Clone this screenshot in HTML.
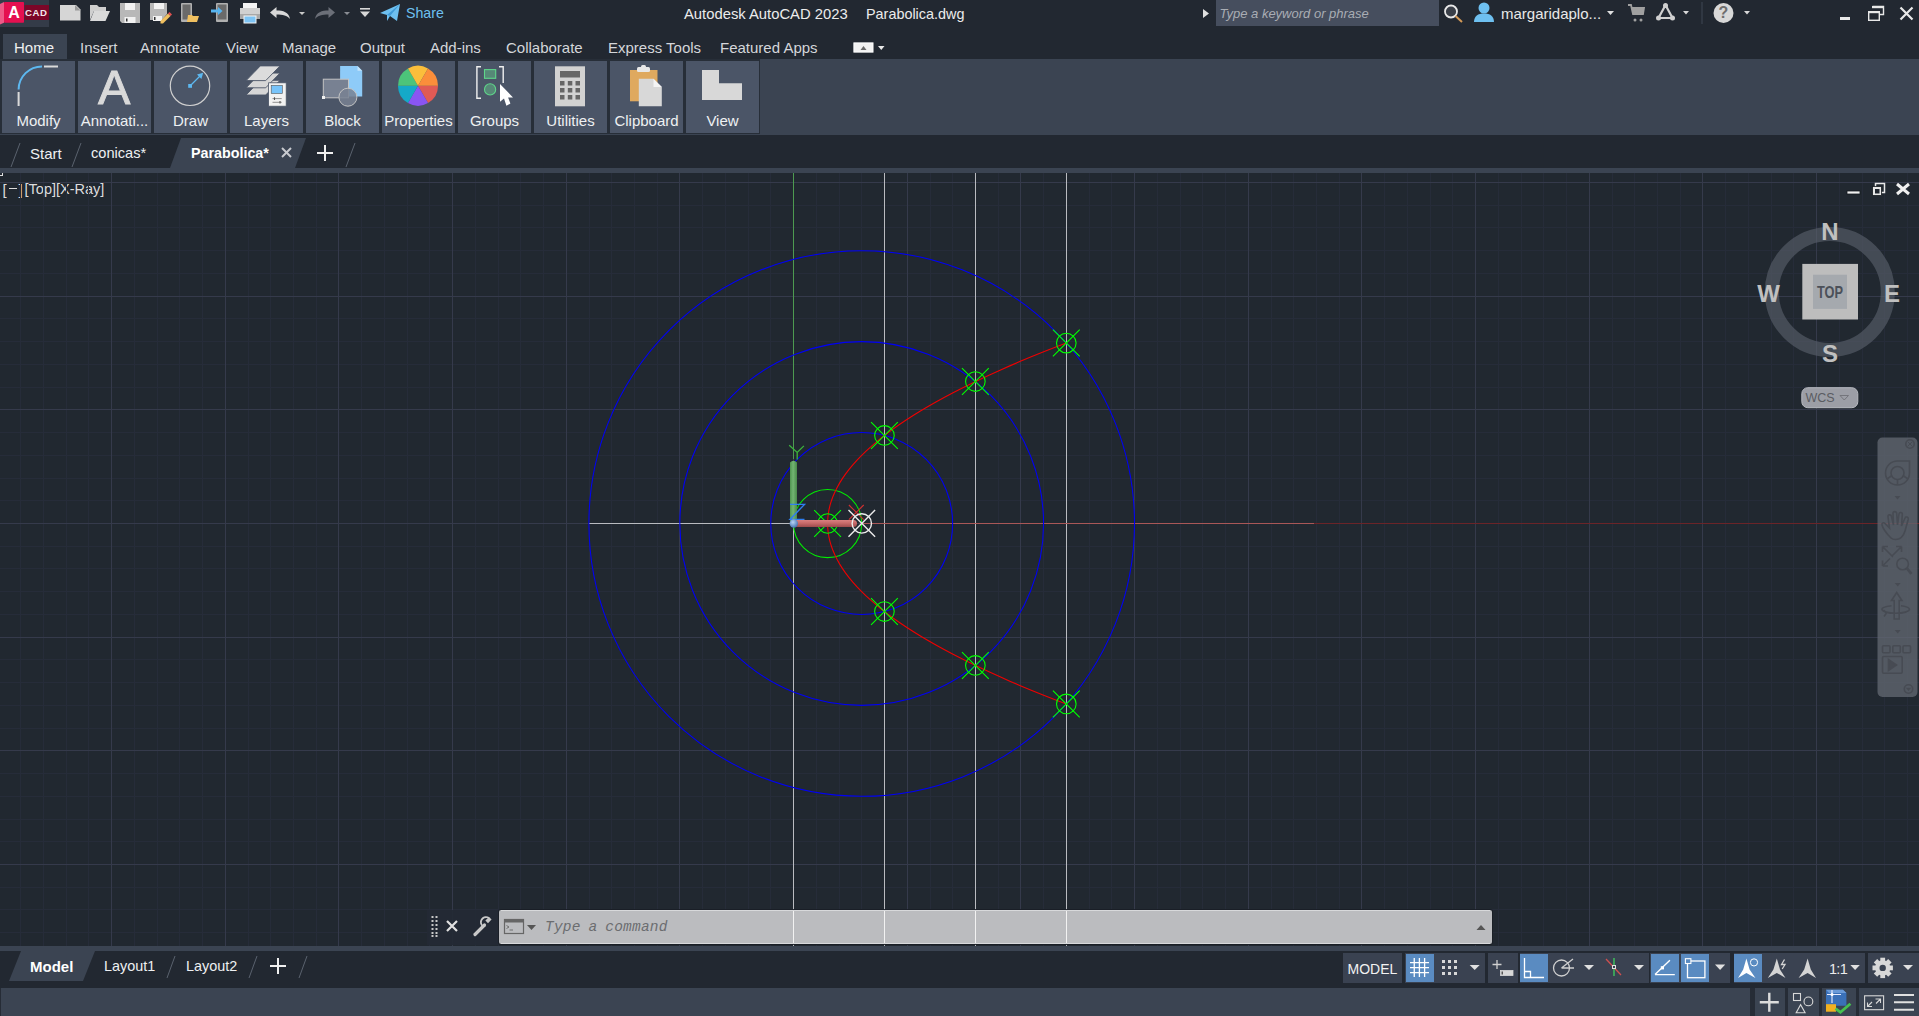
<!DOCTYPE html><html><head><meta charset="utf-8"><style>
*{margin:0;padding:0;box-sizing:border-box}
html,body{width:1919px;height:1016px;overflow:hidden;background:#222831;font-family:"Liberation Sans",sans-serif;color:#e6e6e6}
.a{position:absolute}
.t{position:absolute;white-space:nowrap;line-height:1}
svg{position:absolute;overflow:visible}
</style></head><body><div class="a" style="left:0;top:0;width:1919px;height:59px;background:#222831"></div>
<div class="a" style="left:0;top:59px;width:1919px;height:76px;background:#3b4452"></div>
<div class="a" style="left:0;top:135px;width:1919px;height:33px;background:#222831"></div>
<div class="a" style="left:0;top:168px;width:1919px;height:5px;background:#3b4452"></div>
<div class="a" style="left:0;top:173px;width:1919px;height:773px;background:#212830"></div>
<div class="a" style="left:0;top:946px;width:1919px;height:5px;background:#3b4452"></div>
<div class="a" style="left:0;top:951px;width:1919px;height:37px;background:#222831"></div>
<div class="a" style="left:0;top:988px;width:1919px;height:28px;background:#3b4452"></div>
<div class="a" style="left:0;top:988px;width:1px;height:28px;background:#262c36"></div>
<div class="a" style="left:0;top:0;width:49px;height:27px;background:#343b48"></div>
<svg style="left:0;top:0" width="50" height="27"><path d="M0 4L4 2V22.7L0 24.5Z" fill="#ee5a88"/><rect x="4" y="2" width="20" height="20.7" rx="0.8" fill="#e51050"/><rect x="24.5" y="5" width="24.5" height="15" fill="#7c0628"/><text x="14" y="18" font-family="Liberation Sans" font-weight="bold" font-size="16" fill="#ffffff" text-anchor="middle">A</text><text x="36.3" y="16" font-family="Liberation Sans" font-weight="bold" font-size="9.6" letter-spacing="0.6" fill="#f4e8ec" text-anchor="middle">CAD</text></svg>
<div class="t" style="left:684px;top:7.3px;font-size:14.8px;color:#ececec">Autodesk AutoCAD 2023</div><div class="t" style="left:866px;top:7.3px;font-size:14.4px;color:#ececec">Parabolica.dwg</div>
<div class="t" style="left:406px;top:6.3px;font-size:14.2px;color:#6ec0f0">Share</div>
<div class="a" style="left:1216px;top:0;width:223px;height:26px;background:#464e5e"></div>
<div class="t" style="left:1219.5px;top:7px;font-size:13px;font-style:italic;color:#a9adb4">Type a keyword or phrase</div>
<div class="t" style="left:1501px;top:6px;font-size:15px;color:#e8e8e8">margaridaplo...</div>
<div class="a" style="left:3px;top:34px;width:64px;height:25px;background:#3b4452"></div>
<div class="t" style="left:14px;top:39.5px;font-size:15px;color:#f0f0f0">Home</div>
<div class="t" style="left:80px;top:39.5px;font-size:15px;color:#d4d6da">Insert</div>
<div class="t" style="left:140px;top:39.5px;font-size:15px;color:#d4d6da">Annotate</div>
<div class="t" style="left:226px;top:39.5px;font-size:15px;color:#d4d6da">View</div>
<div class="t" style="left:282px;top:39.5px;font-size:15px;color:#d4d6da">Manage</div>
<div class="t" style="left:360px;top:39.5px;font-size:15px;color:#d4d6da">Output</div>
<div class="t" style="left:430px;top:39.5px;font-size:15px;color:#d4d6da">Add-ins</div>
<div class="t" style="left:506px;top:39.5px;font-size:15px;color:#d4d6da">Collaborate</div>
<div class="t" style="left:608px;top:39.5px;font-size:15px;color:#d4d6da">Express Tools</div>
<div class="t" style="left:720px;top:39.5px;font-size:15px;color:#d4d6da">Featured Apps</div>
<div class="a" style="left:0;top:59px;width:760px;height:75px;background:#272e38"></div>
<div class="a" style="left:2px;top:61px;width:73px;height:72px;background:#4b5567"></div>
<div class="t" style="left:2px;top:113px;width:73px;text-align:center;font-size:15px;color:#eef0f2">Modify</div>
<div class="a" style="left:78px;top:61px;width:73px;height:72px;background:#4b5567"></div>
<div class="t" style="left:78px;top:113px;width:73px;text-align:center;font-size:15px;color:#eef0f2">Annotati...</div>
<div class="a" style="left:154px;top:61px;width:73px;height:72px;background:#4b5567"></div>
<div class="t" style="left:154px;top:113px;width:73px;text-align:center;font-size:15px;color:#eef0f2">Draw</div>
<div class="a" style="left:230px;top:61px;width:73px;height:72px;background:#4b5567"></div>
<div class="t" style="left:230px;top:113px;width:73px;text-align:center;font-size:15px;color:#eef0f2">Layers</div>
<div class="a" style="left:306px;top:61px;width:73px;height:72px;background:#4b5567"></div>
<div class="t" style="left:306px;top:113px;width:73px;text-align:center;font-size:15px;color:#eef0f2">Block</div>
<div class="a" style="left:382px;top:61px;width:73px;height:72px;background:#4b5567"></div>
<div class="t" style="left:382px;top:113px;width:73px;text-align:center;font-size:15px;color:#eef0f2">Properties</div>
<div class="a" style="left:458px;top:61px;width:73px;height:72px;background:#4b5567"></div>
<div class="t" style="left:458px;top:113px;width:73px;text-align:center;font-size:15px;color:#eef0f2">Groups</div>
<div class="a" style="left:534px;top:61px;width:73px;height:72px;background:#4b5567"></div>
<div class="t" style="left:534px;top:113px;width:73px;text-align:center;font-size:15px;color:#eef0f2">Utilities</div>
<div class="a" style="left:610px;top:61px;width:73px;height:72px;background:#4b5567"></div>
<div class="t" style="left:610px;top:113px;width:73px;text-align:center;font-size:15px;color:#eef0f2">Clipboard</div>
<div class="a" style="left:686px;top:61px;width:73px;height:72px;background:#4b5567"></div>
<div class="t" style="left:686px;top:113px;width:73px;text-align:center;font-size:15px;color:#eef0f2">View</div>
<svg style="left:0;top:134px" width="400" height="40"><polygon points="170,34 181,4 306,4 295,34" fill="#3b4452"/><g stroke="#5a626e" stroke-width="1"><line x1="11" y1="33" x2="20" y2="9"/><line x1="72" y1="33" x2="81" y2="9"/><line x1="346" y1="33" x2="355" y2="9"/></g><g stroke="#c8cacf" stroke-width="2"><line x1="282" y1="14" x2="291" y2="23"/><line x1="291" y1="14" x2="282" y2="23"/></g><g stroke="#f0f0f0" stroke-width="2"><line x1="317" y1="19" x2="333" y2="19"/><line x1="325" y1="11" x2="325" y2="27"/></g></svg>
<div class="t" style="left:30px;top:146px;font-size:15px;color:#eef0f2">Start</div>
<div class="t" style="left:91px;top:146px;font-size:14.6px;color:#eef0f2">conicas*</div>
<div class="t" style="left:191px;top:146px;font-size:14.3px;font-weight:bold;color:#ffffff">Parabolica*</div>
<svg style="left:0;top:951px" width="320" height="37"><polygon points="9,30 21,0 95,0 83,30" fill="#3b4452"/><g stroke="#5a626e" stroke-width="1"><line x1="167" y1="27" x2="175" y2="5"/><line x1="249" y1="27" x2="257" y2="5"/><line x1="299" y1="27" x2="307" y2="5"/></g><g stroke="#f0f0f0" stroke-width="2"><line x1="270" y1="15" x2="286" y2="15"/><line x1="278" y1="7" x2="278" y2="23"/></g></svg>
<div class="t" style="left:30px;top:959px;font-size:15px;font-weight:bold;color:#ffffff">Model</div>
<div class="t" style="left:104px;top:959px;font-size:14.4px;color:#eef0f2">Layout1</div>
<div class="t" style="left:186px;top:959px;font-size:14.4px;color:#eef0f2">Layout2</div>
<div class="t" style="left:2.5px;top:181.5px;font-size:15px;color:#dcdcdc">[</div><div class="a" style="left:8.8px;top:188px;width:8.4px;height:1.3px;background:#dcdcdc"></div><div class="t" style="left:18.4px;top:181.5px;font-size:15px;color:#dcdcdc">]</div><div class="t" style="left:24.6px;top:181.5px;font-size:14.5px;color:#dcdcdc">[Top][X-Ray]</div><div class="a" style="left:0;top:175px;width:3px;height:1px;background:#e0e0e0"></div><div class="a" style="left:2px;top:173px;width:1px;height:3px;background:#e0e0e0"></div>
<svg style="left:0;top:0" width="1919" height="1016" viewBox="0 0 1919 1016"><defs><clipPath id="vpc"><rect x="0" y="173" width="1919" height="773"/></clipPath></defs><g clip-path="url(#vpc)"><path d="M20.5 173V946M43.5 173V946M66.5 173V946M88.5 173V946M134.5 173V946M157.5 173V946M179.5 173V946M202.5 173V946M248.5 173V946M270.5 173V946M293.5 173V946M316.5 173V946M361.5 173V946M384.5 173V946M407.5 173V946M429.5 173V946M475.5 173V946M498.5 173V946M520.5 173V946M543.5 173V946M589.5 173V946M611.5 173V946M634.5 173V946M657.5 173V946M702.5 173V946M725.5 173V946M748.5 173V946M770.5 173V946M816.5 173V946M839.5 173V946M861.5 173V946M884.5 173V946M930.5 173V946M952.5 173V946M975.5 173V946M998.5 173V946M1043.5 173V946M1066.5 173V946M1089.5 173V946M1111.5 173V946M1157.5 173V946M1180.5 173V946M1202.5 173V946M1225.5 173V946M1271.5 173V946M1293.5 173V946M1316.5 173V946M1339.5 173V946M1384.5 173V946M1407.5 173V946M1430.5 173V946M1452.5 173V946M1498.5 173V946M1521.5 173V946M1543.5 173V946M1566.5 173V946M1612.5 173V946M1634.5 173V946M1657.5 173V946M1680.5 173V946M1725.5 173V946M1748.5 173V946M1771.5 173V946M1793.5 173V946M1839.5 173V946M1862.5 173V946M1884.5 173V946M1907.5 173V946M0 205.5H1919M0 227.5H1919M0 250.5H1919M0 273.5H1919M0 318.5H1919M0 341.5H1919M0 364.5H1919M0 387.5H1919M0 432.5H1919M0 455.5H1919M0 478.5H1919M0 500.5H1919M0 546.5H1919M0 568.5H1919M0 591.5H1919M0 614.5H1919M0 659.5H1919M0 682.5H1919M0 705.5H1919M0 728.5H1919M0 773.5H1919M0 796.5H1919M0 819.5H1919M0 841.5H1919M0 887.5H1919M0 909.5H1919M0 932.5H1919" stroke="#262c39" stroke-width="1" fill="none" shape-rendering="crispEdges"/><path d="M111.5 173V946M225.5 173V946M338.5 173V946M452.5 173V946M566.5 173V946M679.5 173V946M793.5 173V946M907.5 173V946M1020.5 173V946M1134.5 173V946M1248.5 173V946M1361.5 173V946M1475.5 173V946M1589.5 173V946M1702.5 173V946M1816.5 173V946M0 182.5H1919M0 296.5H1919M0 409.5H1919M0 523.5H1919M0 637.5H1919M0 750.5H1919M0 864.5H1919" stroke="#353a4b" stroke-width="1" fill="none" shape-rendering="crispEdges"/><path d="M884.5 173V946M975.5 173V946M1066.5 173V946M793.5 523V946M589 523.5H793" stroke="#b9bbc0" stroke-width="1.2" fill="none" shape-rendering="crispEdges"/><path d="M793.5 173V459" stroke="#4d9a50" stroke-width="1" fill="none" shape-rendering="crispEdges"/><path d="M862 523.5H1314" stroke="#a95757" stroke-width="1" fill="none" shape-rendering="crispEdges"/><path d="M1314 523.5H1919" stroke="#6b2428" stroke-width="1" fill="none" shape-rendering="crispEdges"/><circle cx="861.70" cy="523.50" r="90.93" stroke="#0000f6" stroke-width="1.05" fill="none"/><circle cx="861.70" cy="523.50" r="181.86" stroke="#0000f6" stroke-width="1.05" fill="none"/><circle cx="861.70" cy="523.50" r="272.80" stroke="#0000f6" stroke-width="1.05" fill="none"/><circle cx="827.60" cy="523.50" r="34.10" stroke="#00f000" stroke-width="1.05" fill="none"/><polyline points="1066.30,343.06 1054.51,347.57 1043.02,352.08 1031.83,356.60 1020.94,361.11 1010.35,365.62 1000.06,370.13 990.06,374.64 980.37,379.15 970.97,383.66 961.87,388.17 953.06,392.68 944.56,397.19 936.36,401.70 928.45,406.22 920.84,410.73 913.53,415.24 906.52,419.75 899.81,424.26 893.39,428.77 887.27,433.28 881.46,437.79 875.94,442.30 870.71,446.81 865.79,451.32 861.17,455.84 856.84,460.35 852.81,464.86 849.08,469.37 845.65,473.88 842.52,478.39 839.68,482.90 837.15,487.41 834.91,491.92 832.97,496.43 831.33,500.95 829.99,505.46 828.94,509.97 828.20,514.48 827.75,518.99 827.60,523.50 827.75,528.01 828.20,532.52 828.94,537.03 829.99,541.54 831.33,546.05 832.97,550.57 834.91,555.08 837.15,559.59 839.68,564.10 842.52,568.61 845.65,573.12 849.08,577.63 852.81,582.14 856.84,586.65 861.17,591.16 865.79,595.68 870.71,600.19 875.94,604.70 881.46,609.21 887.27,613.72 893.39,618.23 899.81,622.74 906.52,627.25 913.53,631.76 920.84,636.27 928.45,640.78 936.36,645.30 944.56,649.81 953.06,654.32 961.87,658.83 970.97,663.34 980.37,667.85 990.06,672.36 1000.06,676.87 1010.35,681.38 1020.94,685.89 1031.83,690.40 1043.02,694.92 1054.51,699.43 1066.30,703.94" stroke="#f00000" stroke-width="1.1" fill="none"/><g stroke="#00ff00" stroke-width="1.1" fill="none"><circle cx="827.60" cy="523.50" r="9.8"/><path d="M814.20 510.10L841.00 536.90M814.20 536.90L841.00 510.10"/></g><g stroke="#00ff00" stroke-width="1.1" fill="none"><circle cx="884.43" cy="611.54" r="9.8"/><path d="M871.03 598.14L897.83 624.94M871.03 624.94L897.83 598.14"/></g><g stroke="#00ff00" stroke-width="1.1" fill="none"><circle cx="884.43" cy="435.46" r="9.8"/><path d="M871.03 422.06L897.83 448.86M871.03 448.86L897.83 422.06"/></g><g stroke="#00ff00" stroke-width="1.1" fill="none"><circle cx="975.36" cy="665.47" r="9.8"/><path d="M961.96 652.07L988.76 678.87M961.96 678.87L988.76 652.07"/></g><g stroke="#00ff00" stroke-width="1.1" fill="none"><circle cx="975.36" cy="381.53" r="9.8"/><path d="M961.96 368.13L988.76 394.93M961.96 394.93L988.76 368.13"/></g><g stroke="#00ff00" stroke-width="1.1" fill="none"><circle cx="1066.30" cy="703.94" r="9.8"/><path d="M1052.90 690.54L1079.70 717.34M1052.90 717.34L1079.70 690.54"/></g><g stroke="#00ff00" stroke-width="1.1" fill="none"><circle cx="1066.30" cy="343.06" r="9.8"/><path d="M1052.90 329.66L1079.70 356.46M1052.90 356.46L1079.70 329.66"/></g><path d="M848.9 505L863.7 519.7M863.7 505L848.9 519.7" stroke="#d03030" stroke-width="1.1" fill="none"/></g></svg>
<svg style="left:0;top:0" width="1919" height="1016">
<defs>
<linearGradient id="gy" x1="0" x2="1" y1="0" y2="0"><stop offset="0" stop-color="#4f9450"/><stop offset="0.45" stop-color="#72b472"/><stop offset="1" stop-color="#4a8a4b"/></linearGradient>
<linearGradient id="gx" x1="0" x2="0" y1="0" y2="1"><stop offset="0" stop-color="#d88080"/><stop offset="0.45" stop-color="#c76a6a"/><stop offset="1" stop-color="#9c4a4c"/></linearGradient>
<radialGradient id="go" cx="0.4" cy="0.35" r="0.7"><stop offset="0" stop-color="#b8d4f4"/><stop offset="1" stop-color="#3f6fb0"/></radialGradient>
</defs>
<path d="M789.2 445.3L797.2 452.4L803.9 445.9M797.2 452.4V459.5" stroke="#3cb43c" stroke-width="1.3" fill="none"/>
<path d="M790 462.5 Q793.5 459 797 462.5 V521 H790Z" fill="url(#gy)"/>
<path d="M790 504.4H804.5L790 519.4H804.5" stroke="#2f7ff0" stroke-width="1.4" fill="none"/>
<rect x="793" y="520" width="64" height="7" rx="3.5" fill="url(#gx)"/>
<circle cx="793.8" cy="523.5" r="4.2" fill="url(#go)"/>
<g stroke="#ececec" stroke-width="1.4" fill="none"><circle cx="861.8" cy="523.4" r="9.7"/><path d="M848.5 510.1L875.1 536.7M848.5 536.7L875.1 510.1"/></g>
</svg>
<div class="a" style="left:427px;top:910px;width:72px;height:35px;background:rgba(36,42,53,0.93)"></div>
<div class="a" style="left:498px;top:909px;width:995px;height:36px;background:rgba(25,30,38,0.9);border-radius:3px"></div>
<div class="a" style="left:499px;top:910px;width:993px;height:34px;background:rgba(196,197,199,0.95);border-radius:2px"></div>
<svg style="left:0;top:0" width="1919" height="1016"><path d="M793.5 910V944M884.5 910V944M975.5 910V944M1066.5 910V944" stroke="#f2f2f2" stroke-width="1.1" shape-rendering="crispEdges"/><path d="M501 910.5H1490M501 943.5H1490" stroke="#d8d9db" stroke-width="1" shape-rendering="crispEdges"/></svg>
<svg style="left:420px;top:900px" width="1080" height="50">
<g fill="#c8c8c8"><rect x="11.5" y="16" width="2" height="2"/><rect x="15.5" y="16" width="2" height="2"/><rect x="11.5" y="20" width="2" height="2"/><rect x="15.5" y="20" width="2" height="2"/><rect x="11.5" y="24" width="2" height="2"/><rect x="15.5" y="24" width="2" height="2"/><rect x="11.5" y="28" width="2" height="2"/><rect x="15.5" y="28" width="2" height="2"/><rect x="11.5" y="32" width="2" height="2"/><rect x="15.5" y="32" width="2" height="2"/><rect x="11.5" y="35" width="2" height="2"/><rect x="15.5" y="35" width="2" height="2"/></g>
<path d="M27 21L37 31M37 21L27 31" stroke="#e0e0e0" stroke-width="2.2"/>
<path d="M55 34.5L64.5 25" stroke="#c8c8c8" stroke-width="3.2" stroke-linecap="round"/>
<path d="M63 26.5 A5.2 5.2 0 1 1 70.5 19.5 L68 22 L66.5 20.5 L69 18 A5.2 5.2 0 0 0 63 26.5Z" fill="#c8c8c8" stroke="#c8c8c8" stroke-width="1.6"/>
<rect x="84.5" y="19.5" width="19" height="14" fill="none" stroke="#666" stroke-width="1.2"/><rect x="84.5" y="19.5" width="19" height="3" fill="#666"/>
<path d="M86.5 25.5L89 27L86.5 28.5M89.5 30H93" stroke="#666" stroke-width="0.9" fill="none"/>
<path d="M107 25H116L111.5 30Z" fill="#555"/>
<path d="M1056 930.5" />
<path d="M1056.5 30H1065.5L1061 25Z" fill="#555"/>
</svg>
<div class="t" style="left:545px;top:920px;font-size:14.5px;font-style:italic;font-family:&quot;Liberation Mono&quot;,monospace;letter-spacing:0.2px;color:#6b6d70;word-spacing:-1px">Type a command</div>
<svg style="left:1840px;top:176px" width="79" height="30">
<rect x="7" y="15" width="13" height="3" fill="#f0f0f0" stroke="#15191f" stroke-width="0.8"/>
<rect x="35.5" y="7.5" width="9" height="9" fill="none" stroke="#e8e8e8" stroke-width="1.5"/>
<rect x="32.5" y="10.5" width="9" height="9" fill="#e8e8e8" stroke="#15191f" stroke-width="0.8"/><rect x="35" y="13" width="4.5" height="4.5" fill="#20262e"/>
<path d="M57 8L69 18M69 8L57 18" stroke="#f0f0f0" stroke-width="3"/>
</svg>
<svg style="left:1740px;top:200px" width="179" height="220">
<circle cx="89.8" cy="92" r="58" fill="none" stroke="#5a616c" stroke-opacity="0.62" stroke-width="14"/>
<rect x="62.3" y="63.9" width="55.7" height="55.6" fill="#bdbdbd"/>
<rect x="73" y="74.7" width="34" height="34.2" fill="#a5a9ae"/>
<g font-family="Liberation Sans" font-weight="bold" fill="#c0c0c0" text-anchor="middle">
<text x="90" y="40.3" font-size="24">N</text>
<text x="90" y="162.3" font-size="24">S</text>
<text x="28.5" y="101.5" font-size="24">W</text>
<text x="152" y="101.5" font-size="24">E</text>
</g>
<text x="0" y="98" font-family="Liberation Sans" font-weight="bold" font-size="16" fill="#4b5059" text-anchor="middle" transform="translate(90 0) scale(0.8 1)">TOP</text>
<rect x="61.8" y="187.7" width="56" height="20" rx="6" fill="#9c9ea6" stroke="#b8bac0" stroke-width="1"/>
<text x="80" y="202" font-family="Liberation Sans" font-size="12.5" fill="#5a5c62" text-anchor="middle">WCS</text>
<path d="M100 195.5H108.5L104.25 200Z" fill="none" stroke="#6f7177" stroke-width="0.9"/>
</svg>
<svg style="left:1870px;top:430px" width="49" height="275">
<rect x="7.5" y="7.5" width="40" height="259.5" rx="5" fill="#646973" fill-opacity="0.75"/>
<g stroke="#474b53" fill="none" stroke-width="1.6">
<circle cx="40" cy="14" r="4.2"/><path d="M37.7 11.7L42.3 16.3M42.3 11.7L37.7 16.3" stroke-width="1"/>
<path d="M27.5 31 A12 12 0 1 0 39.5 43 V31Z"/>
<circle cx="27.5" cy="43" r="6.5"/>
<path d="M17 49L22 45.5M38 49L33 45.5M27.5 49.5V55"/>
<path d="M24.5 66H30.5L27.5 69.5Z" fill="#474b53" stroke="none"/>
<path d="M21 108 C17 104 13 99 12 95 C11.5 93 13.5 92 15 93.5 L19.5 98 L18 87 C17.7 84.5 21 84 21.5 86.5 L23.5 95 L23 83.5 C23 81 26.5 81 26.7 83.5 L27.5 95 L29 84 C29.3 81.8 32.5 82 32.3 84.5 L31.5 96 L35 88 C35.8 86 38.8 87 38.2 89.5 L35 101 C33.5 106 30 109.5 25.5 109.5 C23.5 109.5 22 109 21 108Z"/>
<path d="M12.5 116.5L23 127M12.5 116.5V122M12.5 116.5H18M31.5 116.5L22 126M31.5 116.5V122M31.5 116.5H26M12.5 136L20 128.5M12.5 136V130.5M12.5 136H18"/>
<circle cx="32.6" cy="134" r="5.8"/><path d="M36.8 138.2L41.4 143.8" stroke-width="2.8"/>
<path d="M24.7 153H30.7L27.7 156.5Z" fill="#474b53" stroke="none"/>
<path d="M24.2 189V170.5H21.5L26.7 162.5L31.9 170.5H29.2V189Z"/>
<path d="M21.5 175.8 C15.5 176.5 11.9 178 11.9 179.3 C11.9 181.5 18 183.3 25.7 183.3 C33.4 183.3 39.5 181.5 39.5 179.3 C39.5 178 36 176.5 31 175.8"/>
<path d="M16.5 183L13.5 180M16.5 183L14 186.5"/>
<path d="M24.7 200H30.7L27.7 203.5Z" fill="#474b53" stroke="none"/>
<rect x="12.5" y="215.7" width="7.5" height="7" rx="1"/><rect x="22.8" y="215.7" width="7.5" height="7" rx="1"/><rect x="33" y="215.7" width="7.5" height="7" rx="1"/>
<rect x="12.5" y="226.5" width="19.7" height="16.7" rx="1.2"/><path d="M18.5 229.5V240.5L26.5 235Z" fill="#474b53"/>
<circle cx="38.5" cy="259" r="4.2"/><path d="M35.8 257.8H41.2L38.5 261Z" fill="#474b53" stroke="none"/>
</g>
</svg>
<div class="a" style="left:1343px;top:953px;width:59px;height:30px;background:#3a4251"></div>
<div class="a" style="left:1405px;top:953px;width:80px;height:30px;background:#3a4251"></div>
<div class="a" style="left:1488px;top:953px;width:161px;height:30px;background:#3a4251"></div>
<div class="a" style="left:1650px;top:953px;width:80px;height:30px;background:#3a4251"></div>
<div class="a" style="left:1734px;top:953px;width:131px;height:30px;background:#3a4251"></div>
<div class="a" style="left:1868px;top:953px;width:51px;height:30px;background:#3a4251"></div>
<div class="a" style="left:1518px;top:953px;width:2px;height:30px;background:#232932"></div>
<div class="a" style="left:1406px;top:954px;width:28px;height:28px;background:#5a8bc1"></div>
<div class="a" style="left:1520px;top:954px;width:28px;height:28px;background:#5a8bc1"></div>
<div class="a" style="left:1651px;top:954px;width:28px;height:28px;background:#5a8bc1"></div>
<div class="a" style="left:1681px;top:954px;width:28px;height:28px;background:#5a8bc1"></div>
<div class="a" style="left:1734px;top:954px;width:28px;height:28px;background:#5a8bc1"></div>
<div class="t" style="left:1347.5px;top:962px;font-size:14px;color:#f2f2f2">MODEL</div>
<div class="t" style="left:1829px;top:961.5px;font-size:14.5px;color:#ececec;letter-spacing:-0.7px">1:1</div>
<div class="a" style="left:1750px;top:988px;width:5px;height:28px;background:#262c36"></div>
<div class="a" style="left:1785px;top:988px;width:3px;height:28px;background:#262c36"></div>
<div class="a" style="left:1819px;top:988px;width:3px;height:28px;background:#262c36"></div>
<div class="a" style="left:1856px;top:988px;width:3px;height:28px;background:#262c36"></div>
<svg style="left:0;top:0" width="1919" height="1016">
<path d="M1414.25 958V977M1419.4 958V977M1424.6 958V977M1410 962.6H1429M1410 967.6H1429M1410 972.6H1429" stroke="#ffffff" stroke-width="1.3" fill="none"/>
<g fill="#d8d8d8"><rect x="1442" y="960" width="3" height="3"/><rect x="1448" y="960" width="3" height="3"/><rect x="1454" y="960" width="3" height="3"/><rect x="1442" y="966" width="3" height="3"/><rect x="1448" y="966" width="3" height="3"/><rect x="1454" y="966" width="3" height="3"/><rect x="1442" y="972" width="3" height="3"/><rect x="1448" y="972" width="3" height="3"/><rect x="1454" y="972" width="3" height="3"/></g>
<g fill="#e0e0e0">
<path d="M1469.7 965H1479.7L1474.7 970Z"/><path d="M1584 965H1594L1589 970Z"/><path d="M1634 965H1644L1639 970Z"/><path d="M1715 964.5H1725.2L1720.1 970Z"/><path d="M1850.4 965H1859.8L1855.1 970Z"/><path d="M1903 965H1913L1908 970Z"/>
</g>
<path d="M1497 960V969M1492.5 964.5H1501.5" stroke="#d0d0d0" stroke-width="1.3"/>
<rect x="1500.5" y="970.5" width="12.5" height="5" fill="#d8d8d8" stroke="#d8d8d8" stroke-width="0.8"/><rect x="1501.5" y="971.5" width="1.5" height="3" fill="#555"/>
<path d="M1524.5 958V977.5H1544M1524.5 971.5H1530.5V977.5" stroke="#ffffff" stroke-width="1.3" fill="none"/>
<g stroke="#d0d0d0" stroke-width="1.3" fill="none"><circle cx="1561.5" cy="968" r="8"/><path d="M1561.5 968H1574M1561.5 968L1573 959"/></g>
<path d="M1614 958V976" stroke="#3fcf5f" stroke-width="1.3"/><path d="M1606 959L1621 975" stroke="#d05050" stroke-width="1.2"/><rect x="1612.5" y="965.5" width="3" height="3" fill="#3a4251" stroke="#e0e0e0" stroke-width="1"/>
<path d="M1655 974.6H1674.8M1655 974.6L1669.9 960.3" stroke="#ffffff" stroke-width="1.4" fill="none"/><rect x="1660.8" y="966.2" width="3.2" height="3.2" fill="#fff"/>
<rect x="1687.5" y="961" width="17.4" height="16.7" fill="none" stroke="#ffffff" stroke-width="1.3"/><rect x="1685.4" y="958.7" width="5.5" height="4.8" fill="#5a8bc1" stroke="#fff" stroke-width="1.1"/>
<path d="M1746.4 958.5L1749.6 969.5L1755.4 977.9L1746.4 972.9L1738 977.9L1743.2 969.5Z" fill="#ffffff"/><circle cx="1754" cy="962.4" r="3.6" fill="none" stroke="#fff" stroke-width="1"/>
<path d="M1776.8 958.5L1780 969.5L1785.5 977.9L1776.8 972.9L1767.8 977.9L1773.4 969.5Z" fill="#d4d4d4"/><path d="M1784.5 959.5L1781.5 964.5H1785L1782.2 969" stroke="#d4d4d4" stroke-width="1.3" fill="none"/>
<path d="M1807.6 958.5L1810.8 969.5L1816 977.9L1807.6 972.9L1798.6 977.9L1804.2 969.5Z" fill="#d4d4d4"/>
<g transform="translate(1882.7 967.9)" fill="#d8d8d8"><circle r="7.6"/>
<g><rect x="-2.4" y="-10.2" width="4.8" height="5"/><rect x="-2.4" y="5.2" width="4.8" height="5"/><rect x="-10.2" y="-2.4" width="5" height="4.8"/><rect x="5.2" y="-2.4" width="5" height="4.8"/></g>
<g transform="rotate(45)"><rect x="-2.4" y="-10.2" width="4.8" height="5"/><rect x="-2.4" y="5.2" width="4.8" height="5"/><rect x="-10.2" y="-2.4" width="5" height="4.8"/><rect x="5.2" y="-2.4" width="5" height="4.8"/></g>
<circle r="3.2" fill="#3a4251"/></g>
<path d="M1759.8 1002.2H1778.8M1769.3 992.7V1011.7" stroke="#dcdcdc" stroke-width="2.4"/>
<g stroke="#d8d8d8" stroke-width="1.1" fill="none"><rect x="1793.5" y="993.5" width="7" height="7"/><circle cx="1808.4" cy="1001.4" r="4.4"/><path d="M1796.2 1012.7H1805.1L1800.6 1004.7Z"/></g>
<path d="M1826 989.8H1843L1846.4 993V1005.7H1826Z" fill="#3a70b8"/><path d="M1826 989.8H1843L1846.4 993H1829Z" fill="#6a9ad8"/>
<path d="M1832 990V1003M1827 994.5H1841" stroke="#e8ecff" stroke-width="1.1"/><circle cx="1832" cy="994.5" r="1.5" fill="#fff"/>
<rect x="1826" y="1004.2" width="10" height="7.5" fill="#f0b020"/><path d="M1835.5 1008.7L1840.4 1012.2L1850.4 1003.7" stroke="#46c050" stroke-width="2.8" fill="none"/>
<g stroke="#d8d8d8" stroke-width="1.1" fill="none"><rect x="1864.6" y="995.8" width="19" height="13.9"/><path d="M1875.5 999H1880.5V1003M1880.5 999L1876 1003.5M1872 1006.5H1867.5V1002.5M1867.5 1006.5L1872 1002"/></g>
<path d="M1894 995H1914M1894 1002.2H1914M1894 1009.7H1914" stroke="#e0e0e0" stroke-width="2"/>
</svg>
<svg style="left:0;top:0" width="1919" height="30">
<path d="M60 5H76L80.5 9.5V20.5H60Z" fill="#d6d6d6"/><path d="M75 5V10.5H80.5Z" fill="#9a9a9a"/>
<path d="M90 5H97L99 7H106V11H94L90 20Z" fill="#cfcfcf"/><path d="M94 11H110L105.5 21H90Z" fill="#dadada"/>
<path d="M120 3H140V23H122L120 21Z" fill="#b8b8b8"/><rect x="125" y="3" width="10" height="7" fill="#f2f2f2"/><rect x="124.5" y="17" width="11" height="6" fill="#f2f2f2"/><rect x="126" y="18.5" width="1.5" height="3" fill="#333"/>
<path d="M150 3H167V14L162 20H150Z" fill="#b8b8b8"/><rect x="154" y="3" width="10" height="6" fill="#f2f2f2"/><rect x="153" y="16" width="9" height="5" fill="#f2f2f2"/><rect x="154" y="17" width="1.5" height="3" fill="#333"/>
<path d="M160.5 21L168 13.5L170.5 16L163 23.5H160.5Z" fill="#f0c060"/><path d="M168 13.5L169.5 12L172 14.5L170.5 16Z" fill="#e05050"/>
<rect x="181" y="3" width="11" height="19" rx="1" fill="#b0b0b0"/><rect x="182.5" y="4.5" width="8" height="15" fill="#6a6a6a"/>
<path d="M188 15H192L193 16H199L197 22H187Z" fill="#f0c060"/>
<rect x="216" y="3" width="12" height="19" rx="1" fill="#b0b0b0"/><rect x="217.5" y="4.5" width="9" height="15" fill="#6a6a6a"/>
<path d="M211 9.5H218V7L222.5 11L218 15V12.5H211Z" fill="#56b4f0"/>
<rect x="243" y="3" width="14" height="6" fill="#f4f4f4"/><path d="M240 8H260V19H240Z" fill="#d0d0d0"/><rect x="240" y="14" width="20" height="5" fill="#a8a8a8"/><rect x="244" y="16" width="12" height="7" fill="#7ec4f4" stroke="#f4f4f4" stroke-width="1"/>
<path d="M270 12.5L276.5 7V10.5C283 10.5 289 12 290 19C287 15.5 283 14.5 276.5 14.5V18Z" fill="#d8d8d8"/>
<path d="M299 12H305L302 15Z" fill="#c8c8c8"/>
<path d="M335 12.5L328.5 7V10.5C322 10.5 316 12 315 19C318 15.5 322 14.5 328.5 14.5V18Z" fill="#6b6f78"/>
<path d="M344 12H350L347 15Z" fill="#8a8d94"/>
<rect x="360" y="8" width="10" height="1.6" fill="#d8d8d8"/><path d="M360 11.5H370L365 17Z" fill="#d8d8d8"/>
<path d="M380 13L400 4L397 21L390 16L387 21V15Z" fill="#6ec0f0"/><path d="M387 15L400 4L390 16Z" fill="#3f9ad8"/>
<path d="M1203 9V18L1209 13.5Z" fill="#e0e0e0"/>
<circle cx="1451" cy="11.5" r="6" fill="#3a3f48" stroke="#e8e8e8" stroke-width="1.8"/><path d="M1455.5 16L1462 22" stroke="#d49a58" stroke-width="2"/>
<circle cx="1484" cy="8" r="5.5" fill="#6ec0f0"/><path d="M1474 22C1474 16 1478 13.5 1484 13.5C1490 13.5 1494 16 1494 22Z" fill="#6ec0f0"/>
<path d="M1607 11H1614L1610.5 15Z" fill="#e0e0e0"/>
<path d="M1628 5H1631L1633 14H1643L1644 8H1632" stroke="#a0a0a0" stroke-width="1.8" fill="none"/><rect x="1632" y="8" width="12" height="6" fill="#a0a0a0"/><circle cx="1635" cy="20" r="1.5" fill="#a0a0a0"/><circle cx="1641" cy="20" r="1.5" fill="#a0a0a0"/>
<path d="M1665.5 5L1658.5 18H1672.5Z" fill="none" stroke="#d0d0d0" stroke-width="2.2" stroke-linejoin="round"/><circle cx="1665.5" cy="5.5" r="2.5" fill="#d0d0d0"/><circle cx="1658.5" cy="18" r="2.5" fill="#d0d0d0"/><circle cx="1672.5" cy="18" r="2.5" fill="#d0d0d0"/>
<path d="M1683 11H1689L1686 14.5Z" fill="#d8d8d8"/>
<rect x="1701.5" y="2" width="1" height="22" fill="#3f4754"/>
<circle cx="1723.5" cy="13" r="10" fill="#d8d8d8"/>
<path d="M1744 11H1750L1747 14.5Z" fill="#d8d8d8"/>
<rect x="1840" y="17" width="10" height="3" fill="#e8e8e8"/>
<path d="M1872.5 6.5H1883.5V14.5H1879" fill="none" stroke="#e8e8e8" stroke-width="1.4"/><rect x="1872" y="6" width="12" height="2.2" fill="#e8e8e8"/>
<rect x="1868.7" y="11.7" width="10.6" height="8.6" fill="#222831" stroke="#e8e8e8" stroke-width="1.4"/><rect x="1868" y="11" width="12" height="2.2" fill="#e8e8e8"/>
<path d="M1900.5 7.5L1912.5 19.5M1912.5 7.5L1900.5 19.5" stroke="#e8e8e8" stroke-width="2.2"/>
</svg>
<div class="t" style="left:1718.5px;top:5px;font-size:16px;font-weight:bold;color:#6e6e6e">?</div>
<svg style="left:0;top:0" width="900" height="140">
<path d="M18.6 89.5 A23.4 23.4 0 0 1 42 66.4" stroke="#5db8f0" stroke-width="2" fill="none"/>
<path d="M18.6 92V106M44 66.5H58" stroke="#dadada" stroke-width="2" fill="none"/>
<text x="114.3" y="103.5" font-family="Liberation Sans" font-size="48.5" fill="#d9d9d9" stroke="#d9d9d9" stroke-width="0.9" text-anchor="middle">A</text>
<circle cx="190" cy="85.8" r="19.7" stroke="#cfcfcf" stroke-width="1.2" fill="none"/>
<rect x="188.2" y="84" width="3.8" height="3.8" fill="#5db8f0"/>
<path d="M190 86L200 76" stroke="#5db8f0" stroke-width="1.3"/><path d="M203.2 72.8L197 74.6L201.4 79Z" fill="#5db8f0"/>
<path d="M246.1 95L260.3 80.3H280L265.7 95Z" fill="#d6d6d6" stroke="#4b5567" stroke-width="0.9"/>
<path d="M246.1 87.8L260.3 73.1H280L265.7 87.8Z" fill="#d6d6d6" stroke="#4b5567" stroke-width="0.9"/>
<path d="M246.1 80.6L260.3 65.9H280L265.7 80.6Z" fill="#dcdcdc" stroke="#4b5567" stroke-width="0.9"/>
<rect x="268.6" y="82.8" width="17.6" height="23.4" fill="#f2f2f2" stroke="#4b5567" stroke-width="0.8"/>
<rect x="271.2" y="85.4" width="11.1" height="8.1" fill="#78c4fa" stroke="#555" stroke-width="0.6"/>
<path d="M272.5 98.6H281.7M272.5 102.3H281.7" stroke="#777" stroke-width="0.8"/><path d="M274.5 97.3V99.9M280 101V103.6" stroke="#555" stroke-width="1.1"/>
<path d="M340.1 66H357.5L362.2 70.7V96.6H340.1Z" fill="#8ecbf8"/><path d="M357.5 66V70.7H362.2Z" fill="#c4e4fb"/>
<rect x="323.3" y="79.2" width="25.2" height="18.6" fill="#788192" stroke="#c4c4c4" stroke-width="1"/>
<circle cx="347.9" cy="97.2" r="9" fill="#788192" fill-opacity="0.85" stroke="#c4c4c4" stroke-width="1"/>
<rect x="322" y="96" width="3" height="3" fill="#f0f0f0"/>
<path d="M418.00 85.80L438.00 85.80A20.0 20.0 0 0 1 428.00 103.12Z" fill="#e05a55"/><path d="M418.00 85.80L428.00 103.12A20.0 20.0 0 0 1 408.00 103.12Z" fill="#8a55f2"/><path d="M418.00 85.80L408.00 103.12A20.0 20.0 0 0 1 398.00 85.80Z" fill="#15a9c8"/><path d="M418.00 85.80L398.00 85.80A20.0 20.0 0 0 1 408.00 68.48Z" fill="#4cc47a"/><path d="M418.00 85.80L408.00 68.48A20.0 20.0 0 0 1 428.00 68.48Z" fill="#fbbe3b"/><path d="M418.00 85.80L428.00 68.48A20.0 20.0 0 0 1 438.00 85.80Z" fill="#fb8e3a"/>
<path d="M481 66.7H476.9V98.2H481M499 66.7H503.2V83" stroke="#f0f0f0" stroke-width="1.4" fill="none"/>
<rect x="484.5" y="69.6" width="11.2" height="8.7" fill="#568877" stroke="#5fd68a" stroke-width="1.1"/>
<circle cx="490.1" cy="89.4" r="5.6" fill="#568877" stroke="#5fd68a" stroke-width="1.1"/>
<path d="M500 84.1V101.8L504 98.4L506.4 105.8L510.4 103.6L508.1 97.4H513Z" fill="#ffffff"/>
<rect x="555" y="66.3" width="30" height="40" fill="#d2d2d2"/><rect x="560" y="71" width="20" height="6.5" fill="#666"/>
<g fill="#666"><rect x="560" y="81" width="4.5" height="4.5"/><rect x="567.8" y="81" width="4.5" height="4.5"/><rect x="575.5" y="81" width="4.5" height="4.5"/>
<rect x="560" y="88" width="4.5" height="4.5"/><rect x="567.8" y="88" width="4.5" height="4.5"/><rect x="575.5" y="88" width="4.5" height="4.5"/>
<rect x="560" y="95" width="4.5" height="4.5"/><rect x="567.8" y="95" width="4.5" height="4.5"/><rect x="575.5" y="95" width="4.5" height="4.5"/></g>
<path d="M630 70H657.5V101.3H630Z" fill="#dfa95f"/><rect x="637" y="67" width="13" height="5" rx="1.5" fill="#e8e8e8"/><rect x="641" y="65" width="5" height="3" rx="1.5" fill="#e8e8e8"/>
<path d="M638.8 78.8H653.5L661.8 87V106.3H638.8Z" fill="#d8d8d8"/><path d="M653.5 78.8V87H661.8Z" fill="#f4f4f4"/>
<path d="M702 69.9H719V83.2H742V100H702Z" fill="#d8d8d8"/>
<rect x="853.9" y="42.9" width="19.1" height="9.2" fill="#f2f2f2" stroke="#ffffff" stroke-width="1"/><path d="M860.5 50H866.5L863.5 46Z" fill="#6a6a6a"/>
<path d="M878 46H884.5L881.25 50Z" fill="#e8e8e8"/>
</svg></body></html>
